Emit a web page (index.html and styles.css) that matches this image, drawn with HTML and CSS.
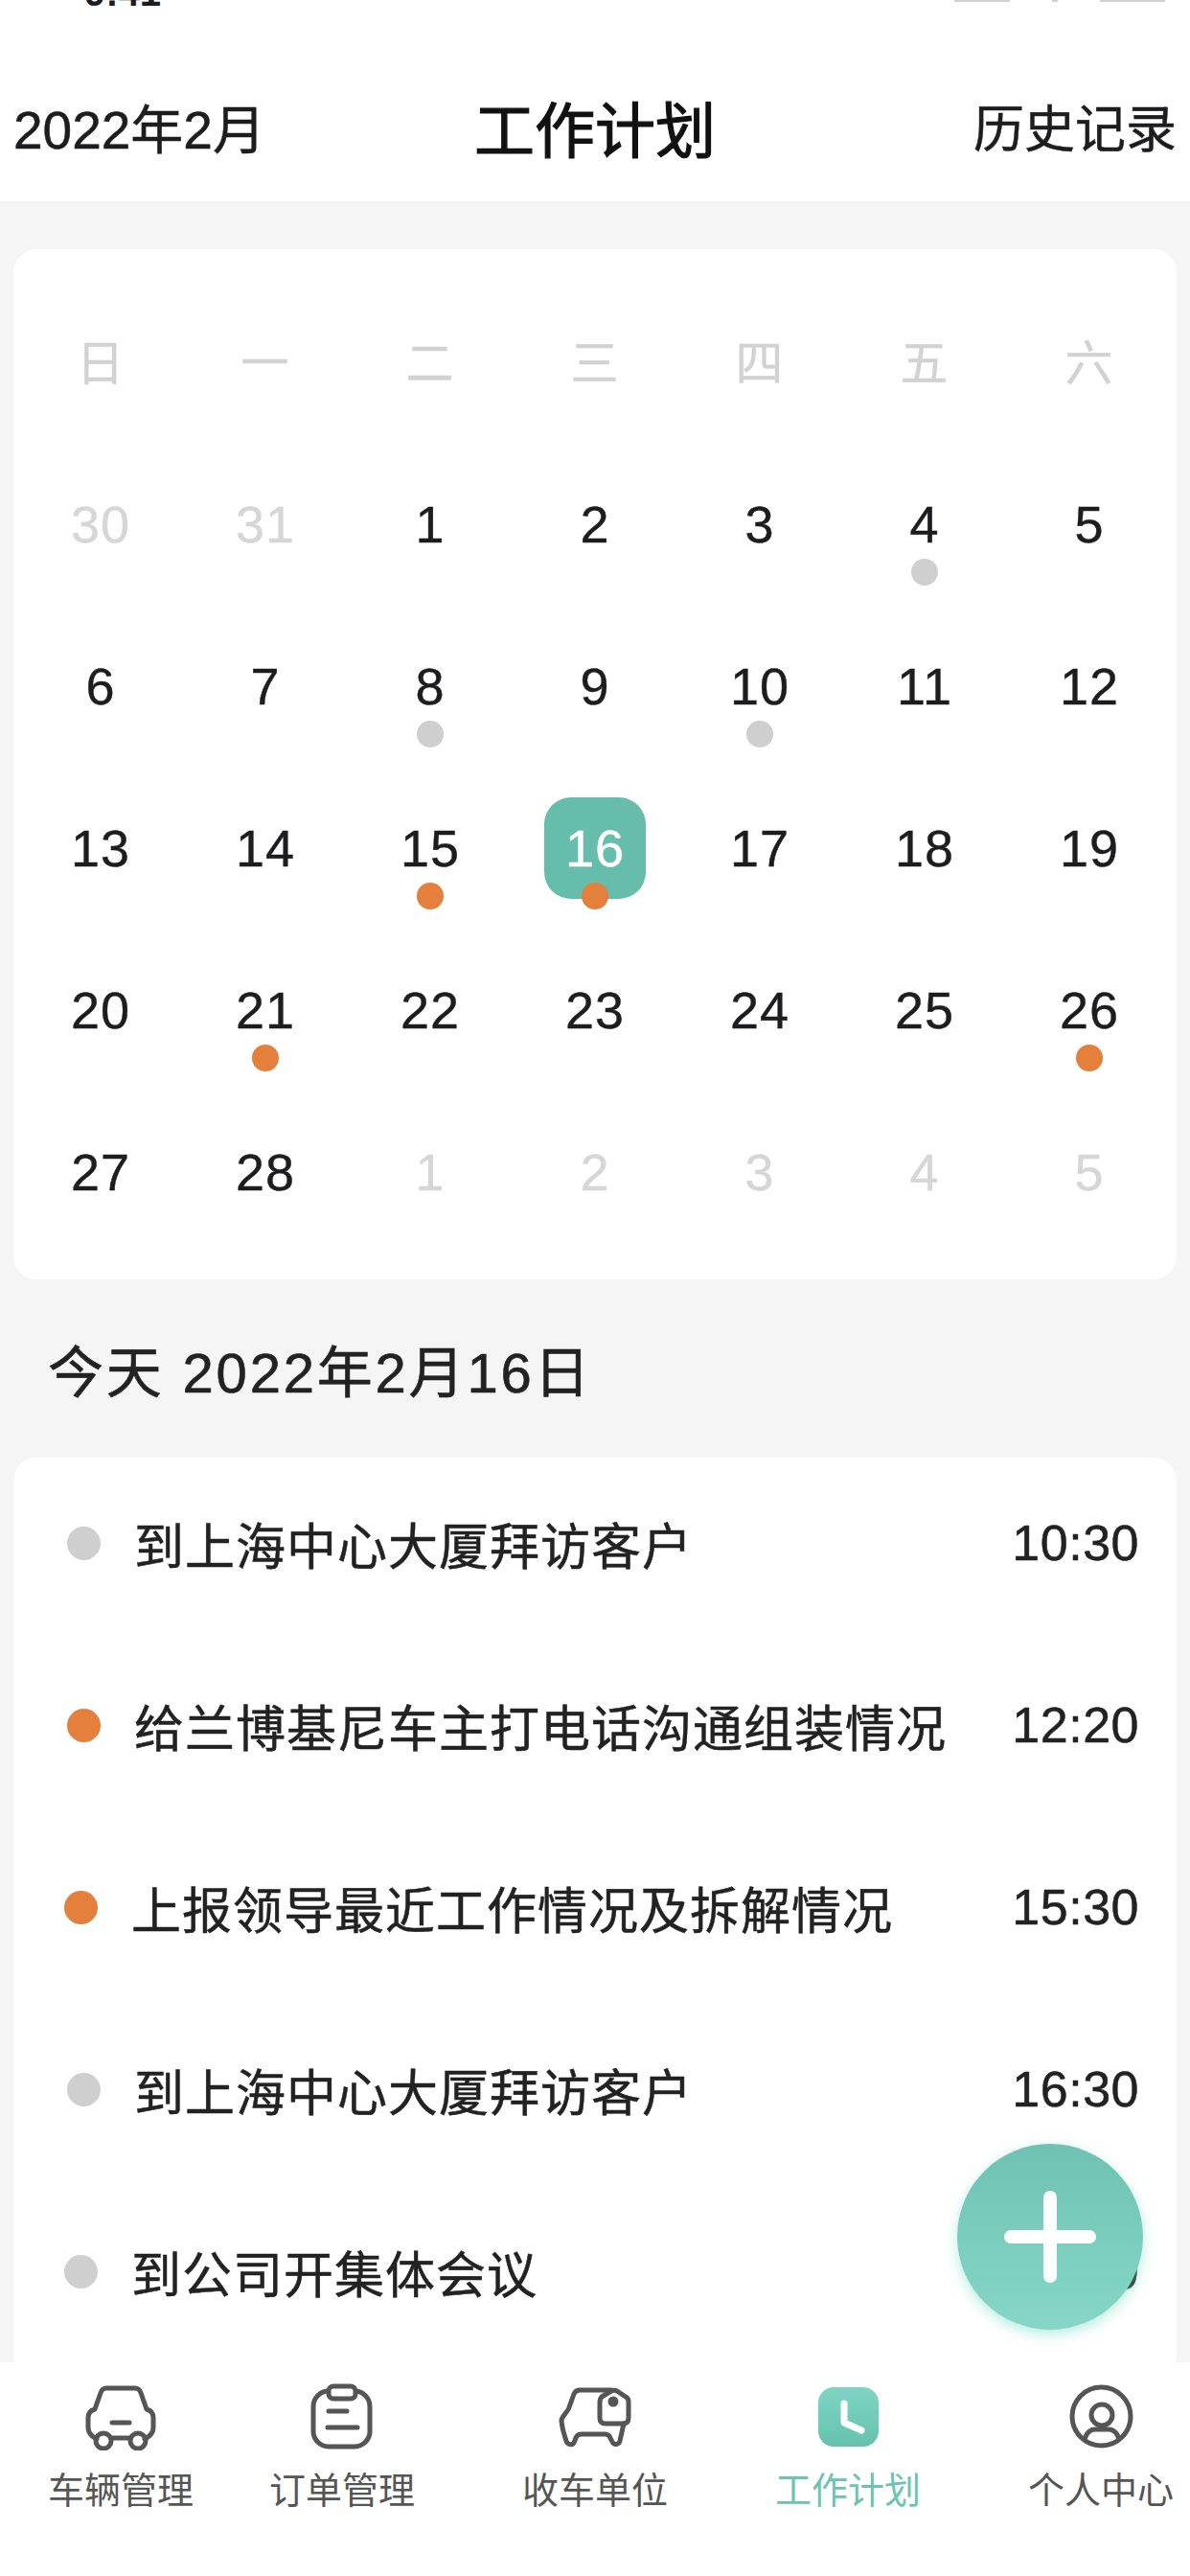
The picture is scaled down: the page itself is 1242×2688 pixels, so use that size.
FILE: index.html
```html
<!DOCTYPE html>
<html lang="zh-CN">
<head>
    <meta charset="UTF-8">
    <meta name="viewport" content="width=device-width, initial-scale=1.0">
    <title>工作计划</title>
    <link rel="stylesheet" href="styles.css">
</head>
<body>
    <div class="phone">
        <div class="status-bar">
            <span class="status-time">9:41</span>
            <div class="status-icons">
                <span class="status-signal"></span>
                <span class="status-wifi"></span>
                <span class="status-battery"></span>
            </div>
        </div>

        <header class="topbar">
            <span class="topbar-month">2022年2月</span>
            <h1 class="topbar-title">工作计划</h1>
            <a class="topbar-link" href="#">历史记录</a>
        </header>

        <main class="content">
            <section class="calendar">
                <div class="cell week">日</div>
                <div class="cell week">一</div>
                <div class="cell week">二</div>
                <div class="cell week">三</div>
                <div class="cell week">四</div>
                <div class="cell week">五</div>
                <div class="cell week">六</div>

                <div class="cell muted">30</div>
                <div class="cell muted">31</div>
                <div class="cell">1</div>
                <div class="cell">2</div>
                <div class="cell">3</div>
                <div class="cell">4<i class="mark mark-done"></i></div>
                <div class="cell">5</div>

                <div class="cell">6</div>
                <div class="cell">7</div>
                <div class="cell">8<i class="mark mark-done"></i></div>
                <div class="cell">9</div>
                <div class="cell">10<i class="mark mark-done"></i></div>
                <div class="cell">11</div>
                <div class="cell">12</div>

                <div class="cell">13</div>
                <div class="cell">14</div>
                <div class="cell">15<i class="mark mark-todo"></i></div>
                <div class="cell"><span class="today">16</span><i class="mark mark-todo"></i></div>
                <div class="cell">17</div>
                <div class="cell">18</div>
                <div class="cell">19</div>

                <div class="cell">20</div>
                <div class="cell">21<i class="mark mark-todo"></i></div>
                <div class="cell">22</div>
                <div class="cell">23</div>
                <div class="cell">24</div>
                <div class="cell">25</div>
                <div class="cell">26<i class="mark mark-todo"></i></div>

                <div class="cell">27</div>
                <div class="cell">28</div>
                <div class="cell muted">1</div>
                <div class="cell muted">2</div>
                <div class="cell muted">3</div>
                <div class="cell muted">4</div>
                <div class="cell muted">5</div>
            </section>

            <h2 class="date-title">今天 2022年2月16日</h2>

            <section class="plans">
                <div class="plan">
                    <i class="plan-dot mark-done"></i>
                    <span class="plan-text">到上海中心大厦拜访客户</span>
                    <span class="plan-time">10:30</span>
                </div>
                <div class="plan">
                    <i class="plan-dot mark-todo"></i>
                    <span class="plan-text">给兰博基尼车主打电话沟通组装情况</span>
                    <span class="plan-time">12:20</span>
                </div>
                <div class="plan plan-shift">
                    <i class="plan-dot mark-todo"></i>
                    <span class="plan-text">上报领导最近工作情况及拆解情况</span>
                    <span class="plan-time">15:30</span>
                </div>
                <div class="plan">
                    <i class="plan-dot mark-done"></i>
                    <span class="plan-text">到上海中心大厦拜访客户</span>
                    <span class="plan-time">16:30</span>
                </div>
                <div class="plan plan-shift">
                    <i class="plan-dot mark-done"></i>
                    <span class="plan-text">到公司开集体会议</span>
                    <span class="plan-time">17:30</span>
                </div>
            </section>
        </main>

        <button class="fab" type="button" aria-label="新增">
            <svg width="100" height="100" viewBox="0 0 100 100">
                <path d="M50 9V91M9 50H91" fill="none" stroke="#fff" stroke-width="14" stroke-linecap="round"/>
            </svg>
        </button>

        <nav class="tabbar">
            <a class="tab tab-first" href="#">
                <svg class="tab-icon" viewBox="0 0 80 70">
                    <path d="M15 58C9 55 6 51 6 46V36C6 31 9 28 13 27L19 10C20 7 22 5 25 5H55C58 5 60 7 61 10L67 27C71 28 74 31 74 36V46C74 51 71 55 65 58M30 57H50M31 41H49"/>
                    <circle cx="22" cy="60" r="8"/>
                    <circle cx="58" cy="60" r="8"/>
                </svg>
                <span>车辆管理</span>
            </a>
            <a class="tab tab-second" href="#">
                <svg class="tab-icon" viewBox="0 0 80 70">
                    <rect x="10" y="8" width="59" height="58" rx="16"/>
                    <rect class="tab-icon-clip" x="26" y="3" width="28" height="13" rx="5"/>
                    <path d="M26 29H45M25 46H56"/>
                </svg>
                <span>订单管理</span>
            </a>
            <a class="tab" href="#">
                <svg class="tab-icon" viewBox="0 0 80 70">
                    <path d="M57 7H24C21 7 19 9 18 11L13 25C12 29 6 34 5 38C5 44 8 54 10 60C11 64 16 65 18 62L20 57C21 54 23 53 26 53H50C53 53 55 54 56 57L58 61C60 65 65 64 66 60L70 42"/>
                    <path d="M47 14L57 8C59 7 61 7 63 8L72 14C74 15 75 17 75 19V36C75 40 73 42 69 42H51C47 42 45 40 45 36V19C45 17 46 15 47 14Z"/>
                    <circle class="tab-icon-dot" cx="59" cy="19" r="3"/>
                </svg>
                <span>收车单位</span>
            </a>
            <a class="tab tab-active" href="#">
                <svg class="tab-icon" viewBox="0 0 80 70">
                    <defs>
                        <linearGradient id="clockFill" x1="0" y1="0" x2="0" y2="1">
                            <stop offset="0" stop-color="#7fd5c4"/>
                            <stop offset="1" stop-color="#65c2ad"/>
                        </linearGradient>
                    </defs>
                    <rect class="tab-icon-clock" x="9" y="4" width="63" height="62" rx="16"/>
                    <path class="tab-icon-hands" d="M36 21V41L54 49"/>
                </svg>
                <span>工作计划</span>
            </a>
            <a class="tab" href="#">
                <svg class="tab-icon" viewBox="0 0 80 70">
                    <circle cx="40.5" cy="34.5" r="30.5"/>
                    <circle cx="41" cy="33" r="11"/>
                    <path d="M23 58C25 52 28 48 34 48H48C54 48 57 52 59 58"/>
                </svg>
                <span>个人中心</span>
            </a>
        </nav>
    </div>
</body>
</html>
```

FILE: styles.css
```css
* {
    box-sizing: border-box;
}

body {
    margin: 0;
    background-color: #fff;
    color: #1d1d1f;
    font-family: "Liberation Sans", "Noto Sans CJK SC", sans-serif;
}

a {
    color: inherit;
    text-decoration: none;
}

.phone {
    position: relative;
    display: flex;
    flex-direction: column;
    width: 1242px;
    height: 2688px;
    overflow: hidden;
}

/* status bar, cut off by the top of the screenshot */
.status-bar {
    display: flex;
    justify-content: space-between;
    flex: none;
    height: 30px;
    padding: 0 26px 0 88px;
    overflow: hidden;
    background-color: #fff;
}

.status-time {
    margin-top: -28px;
    font-size: 40px;
    line-height: 40px;
    font-weight: bold;
}

.status-icons {
    display: flex;
    gap: 44px;
}

.status-signal,
.status-wifi,
.status-battery {
    height: 2px;
    background-color: #d0d0d0;
}

.status-signal {
    width: 58px;
}

.status-wifi {
    width: 6px;
}

.status-battery {
    width: 68px;
}

.topbar {
    display: grid;
    grid-template-columns: 1fr auto 1fr;
    align-items: center;
    flex: none;
    height: 180px;
    padding: 22px 14px 0;
    background-color: #fff;
    font-size: 55px;
    -webkit-text-stroke: 0.5px #1d1d1f;
}

.topbar-title {
    margin: 0;
    font-size: 63px;
    font-weight: normal;
    color: #111;
    -webkit-text-stroke: 1.2px #111;
}

.topbar-link {
    justify-self: end;
    font-size: 53px;
}

.content {
    flex: 1;
    min-height: 0;
    padding: 50px 14px 0;
    overflow: hidden;
    background-color: #f5f5f6;
}

.calendar {
    display: grid;
    grid-template-columns: repeat(7, 172px);
    grid-auto-rows: 169px;
    height: 1075px;
    padding: 33px 5px 0;
    border-radius: 24px;
    background-color: #fff;
}

.cell {
    position: relative;
    display: flex;
    align-items: center;
    justify-content: center;
    font-size: 54px;
    letter-spacing: 1px;
    -webkit-text-stroke: 0.4px currentColor;
}

.week {
    padding-bottom: 6px;
    font-size: 50px;
    color: #d2d2d2;
}

.muted {
    color: #d6d6d6;
}

.today {
    display: flex;
    align-items: center;
    justify-content: center;
    width: 106px;
    height: 106px;
    border-radius: 28px;
    background-color: #66bdab;
    color: #fff;
}

.mark {
    position: absolute;
    top: calc(50% + 36px);
    left: calc(50% - 14px);
    width: 28px;
    height: 28px;
    border-radius: 50%;
}

.mark-done {
    background-color: #cfcfcf;
}

.mark-todo {
    background-color: #e5803c;
}

.date-title {
    display: flex;
    align-items: center;
    height: 186px;
    margin: 0;
    padding-left: 36px;
    font-size: 58px;
    font-weight: normal;
    letter-spacing: 2.8px;
    color: #222;
    -webkit-text-stroke: 0.6px #222;
}

.plans {
    display: flex;
    flex-direction: column;
    gap: 12px;
    height: 960px;
    border-radius: 24px;
    background-color: #fff;
}

.plan {
    display: flex;
    align-items: center;
    flex: none;
    height: 178px;
    padding: 0 39px 0 56px;
    font-size: 52px;
    color: #222;
    -webkit-text-stroke: 0.5px #222;
}

.plan-shift {
    padding-left: 53px;
}

.plan-dot {
    flex: none;
    width: 35px;
    height: 35px;
    margin-right: 35px;
    border-radius: 50%;
}

.plan-text {
    flex: 1;
    letter-spacing: 1px;
}

.plan-time {
    letter-spacing: 0.5px;
}

.fab {
    position: absolute;
    right: 49px;
    bottom: 257px;
    display: flex;
    align-items: center;
    justify-content: center;
    width: 194px;
    height: 194px;
    padding: 0;
    border: 0;
    border-radius: 50%;
    background: linear-gradient(180deg, #6fc2b1, #86d7c7);
    box-shadow: 0 5px 14px rgba(125, 220, 200, 0.55);
}

.tabbar {
    display: flex;
    flex: none;
    gap: 112px;
    height: 223px;
    padding: 22px 0 0 50px;
    background-color: #fff;
}

.tab {
    display: flex;
    flex-direction: column;
    align-items: center;
    width: 152px;
    color: #555;
    font-size: 38px;
    line-height: 44px;
}

.tab-first {
    margin-right: -33px;
}

.tab-active {
    color: #6cc4b0;
}

.tab-icon {
    width: 80px;
    height: 70px;
    margin-bottom: 20px;
    fill: none;
    stroke: #555;
    stroke-width: 5;
    stroke-linecap: round;
    stroke-linejoin: round;
}

.tab-icon-clip {
    fill: #fff;
}

.tab-icon-dot {
    fill: #555;
}

.tab-icon-clock {
    fill: url(#clockFill);
    stroke: none;
}

.tab-icon-hands {
    stroke: #fff;
    stroke-width: 7;
}
```
